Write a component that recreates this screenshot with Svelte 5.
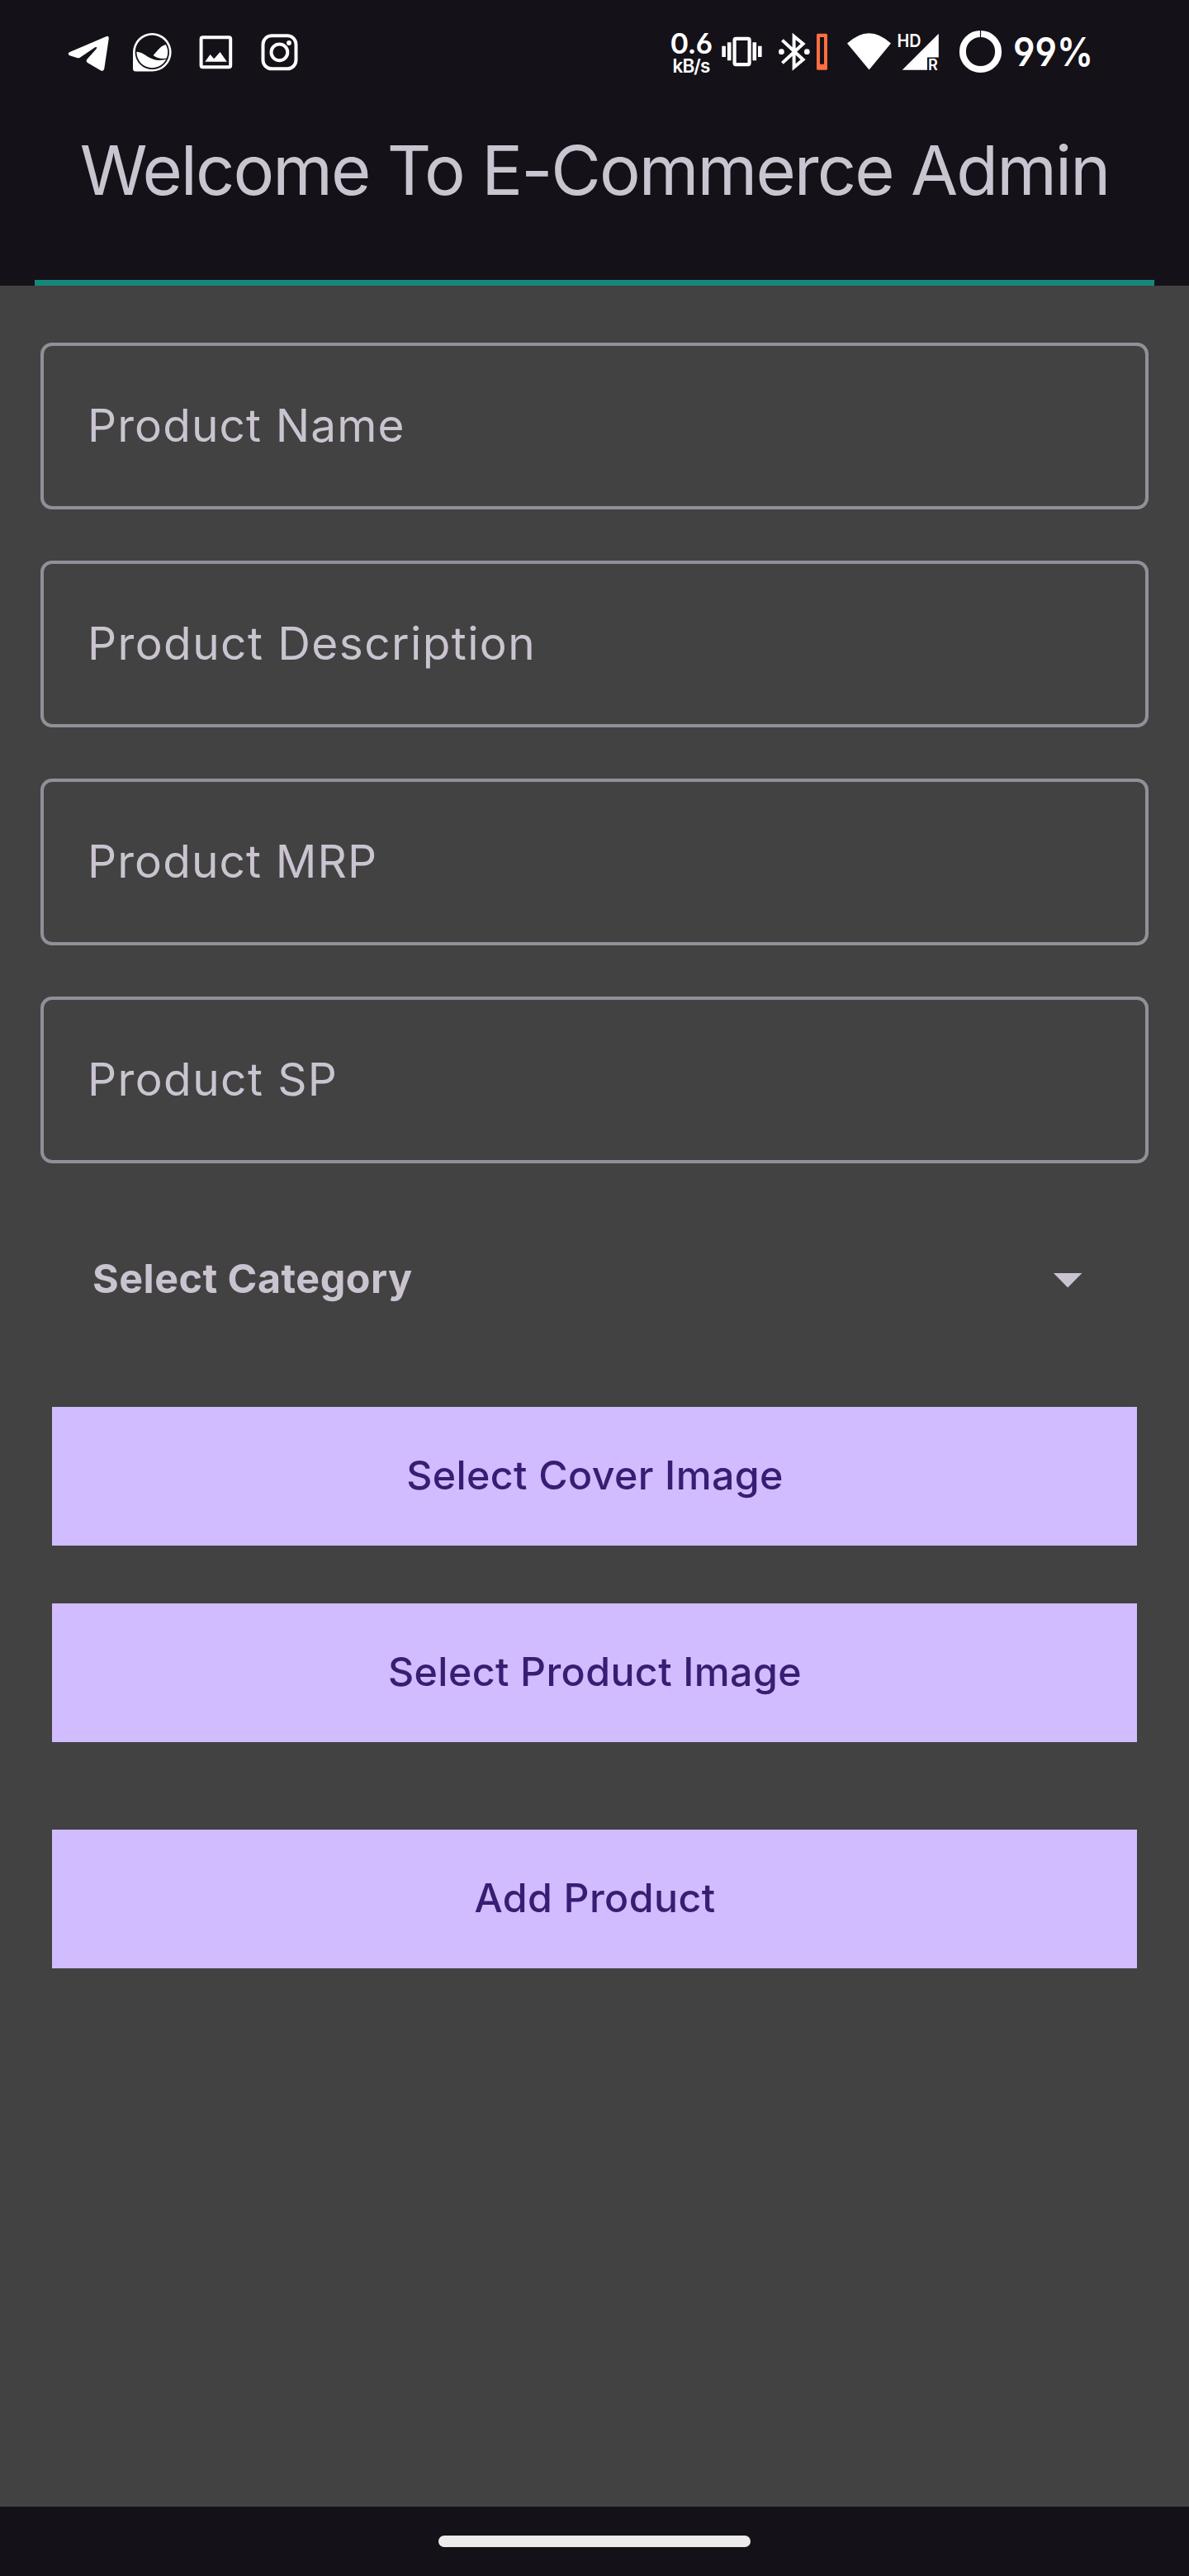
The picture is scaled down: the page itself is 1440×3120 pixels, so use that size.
<script>
  const fields = [
    { id: 'name', label: 'Product Name', spacing: 'regular' },
    { id: 'description', label: 'Product Description', spacing: 'loose' },
    { id: 'mrp', label: 'Product MRP', spacing: 'regular' },
    { id: 'sp', label: 'Product SP', spacing: 'loose' }
  ];
</script>

<div class="screen">
  <header>
    <div class="status">
      <div class="notifications">
        <svg class="telegram" width="52" height="48" viewBox="0 0 52 48" fill="#fff">
          <path d="M2 23.2 L46.5 4.2 Q50 2.9 49.8 6.5 L44.3 43 Q43.4 47.4 39.8 45.3 L24 36 Q21.6 34.2 23.4 31.8 L34.4 19.6 Q36.6 16.3 33.2 17.2 L15.2 29.4 Q13.4 30.7 11.2 30.1 L2.3 27.2 Q-0.7 25.2 2 23.2Z" />
        </svg>
        <svg class="chat" width="50" height="48" viewBox="0 0 50 48">
          <clipPath id="disc"><circle cx="24.3" cy="23.3" r="18.9" /></clipPath>
          <path fill="#fff" d="M24.3 0 A23.3 23.3 0 1 1 24.3 46.6 H4.5 Q1 46.6 1 43 V23.3 A23.3 23.3 0 0 1 24.3 0Z" />
          <circle cx="24.3" cy="23.3" r="20.7" fill="#141118" />
          <g clip-path="url(#disc)" fill="#fff">
            <path d="M4 22.7 C11 22.5 15 26 20 29.3 C27 33.5 34 34 44 31 V46 H4Z" />
            <path d="M25.6 27 C30 23 33 16.5 40 14.3 H46 V29 C39 32.5 31 31.5 25.6 27Z" />
          </g>
        </svg>
        <svg class="picture" width="43" height="48" viewBox="0 0 43 48">
          <rect x="3.6" y="5.3" width="35.6" height="36" rx="2" fill="none" stroke="#fff" stroke-width="4" />
          <path fill="#fff" d="M8.3 34.8 L14.6 26 L19.2 31.3 L26.5 23 L34.8 34.8Z" />
        </svg>
        <svg class="camera" width="47" height="48" viewBox="0 0 47 48" fill="none" stroke="#fff" stroke-width="4">
          <rect x="3.5" y="3.3" width="40" height="40" rx="10.5" />
          <circle cx="23.4" cy="23.3" r="9.9" />
          <circle cx="35" cy="12" r="2.9" fill="#fff" stroke="none" />
        </svg>
      </div>

      <div class="indicators">
        <div class="speed">
          <span class="rate">0.6</span>
          <span class="unit">kB/s</span>
        </div>
        <svg class="vibrate" width="51" height="48" viewBox="0 0 51 48">
          <rect x="16.6" y="6.9" width="18" height="31.2" rx="1.5" fill="none" stroke="#fff" stroke-width="4.2" />
          <path fill="#fff" d="M1.3 15.7 h4.6 v13.3 h-4.6z M7.9 11.3 h4.6 v22 h-4.6z M38.5 11.3 h4.6 v22 h-4.6z M45 15.7 h4.6 v13.3 h-4.6z" />
        </svg>
        <svg class="bluetooth" width="40" height="48" viewBox="0 0 40 48">
          <path fill="none" stroke="#fff" stroke-width="4" d="M5.4 8.6 L30.6 32.2 L19.6 41.5 V4 L30.6 13 L5.4 36.4" />
          <circle cx="4.4" cy="22.7" r="3.4" fill="#fff" />
          <circle cx="35.3" cy="22.7" r="3.4" fill="#fff" />
        </svg>
        <svg class="level" width="13" height="48" viewBox="0 0 13 48">
          <path fill="#ff6e40" fill-rule="evenodd" d="M1.5 .7 h10 q1.5 0 1.5 1.5 v41 q0 1.5 -1.5 1.5 h-10 q-1.5 0 -1.5 -1.5 v-41 q0 -1.5 1.5 -1.5z M4 5 v32.7 h5 v-32.7z" />
        </svg>
        <svg class="wifi" width="53" height="48" viewBox="0 0 53 48">
          <path fill="#fff" d="M0 12.6 Q26.5 -12.2 53 12.6 L26.6 44.6Z" />
        </svg>
        <svg class="signal" width="51" height="48" viewBox="0 0 51 48" fill="#fff">
          <path d="M5.7 44.7 L49.8 .7 V29.4 H36 V44.7Z" />
          <text x="-0.6" y="16.6" font-size="21.5" font-weight="600" textLength="29" lengthAdjust="spacingAndGlyphs">HD</text>
          <text x="37.1" y="44.5" font-size="18" font-weight="600">R</text>
        </svg>
        <svg class="battery" width="53" height="48" viewBox="0 0 53 48">
          <circle cx="26.5" cy="22.5" r="21.6" fill="none" stroke="#fff" stroke-width="8" />
          <path stroke="#141118" stroke-width="1.2" d="M26.5 -4 V6" />
        </svg>
        <svg class="percent" width="98" height="48" viewBox="0 0 98 48" fill="#fff">
          <text x="0" y="39.8" font-size="48" font-weight="600" textLength="97" lengthAdjust="spacingAndGlyphs">99%</text>
        </svg>
      </div>
    </div>
    <h1>Welcome To E-Commerce Admin</h1>
    <div class="divider"></div>
  </header>

  <main>
    <div class="fields">
      {#each fields as field (field.id)}
        <div class="field {field.spacing}">{field.label}</div>
      {/each}
    </div>

    <div class="category">
      <span>Select Category</span>
      <svg class="arrow" width="34" height="18" viewBox="0 0 34 18"><path fill="#cac4d0" d="M0 0 H34.4 L17.2 17.4Z" /></svg>
    </div>

    <div class="actions">
      <button>Select Cover Image</button>
      <button>Select Product Image</button>
      <button class="submit">Add Product</button>
    </div>
  </main>

  <footer><div class="handle"></div></footer>
</div>

<style>
  :global(body) {
    background: #424242;
  }

  .screen {
    width: 1440px;
    height: 3120px;
    display: flex;
    flex-direction: column;
    background: #424242;
    font-family: Inter, Roboto, sans-serif;
    color: #cac4d0;
    overflow: hidden;
  }

  header {
    height: 346px;
    display: flex;
    flex-direction: column;
    background: #141118;
  }

  .status {
    height: 126px;
    box-sizing: border-box;
    padding: 40px 115px 0 82px;
    display: flex;
    align-items: flex-start;
    justify-content: space-between;
    color: #fff;
  }

  .notifications,
  .indicators {
    display: flex;
    align-items: flex-start;
  }

  svg {
    display: block;
    flex: none;
    overflow: visible;
  }

  .chat { margin-left: 26px; }
  .picture { margin-left: 30px; }
  .camera { margin-left: 32px; }

  .speed {
    width: 61px;
    height: 48px;
    box-sizing: border-box;
    padding-right: 3px;
    display: flex;
    flex-direction: column;
    align-items: center;
    font-feature-settings: "ss01";
    white-space: nowrap;
  }

  .rate {
    font-size: 34.5px;
    font-weight: 600;
    line-height: 26px;
    letter-spacing: -0.9px;
  }

  .unit {
    font-size: 22.5px;
    font-weight: 600;
    line-height: 18px;
    letter-spacing: -0.9px;
    margin-top: 5px;
  }

  .vibrate { margin-left: 4px; }
  .bluetooth { margin-left: 18px; }
  .level { margin-left: 7px; }
  .wifi { margin-left: 24px; }
  .signal { margin-left: 8px; }
  .battery { margin-left: 23px; }
  .percent {
    margin-left: 13px;
    font-feature-settings: "ss01";
  }

  h1 {
    margin: 0;
    height: 160px;
    text-align: center;
    font-size: 83px;
    font-weight: 400;
    line-height: 160px;
    letter-spacing: -1.95px;
    white-space: nowrap;
  }

  .divider {
    height: 7px;
    margin: auto 42px 0;
    background: #18877b;
  }

  main {
    flex: 1;
    padding: 69px 49px 0;
  }

  .fields {
    display: grid;
    gap: 62px;
  }

  .field {
    box-sizing: border-box;
    height: 202px;
    padding: 0 53px 2px 53px;
    display: flex;
    align-items: center;
    border: 4px solid #938f99;
    border-radius: 14px;
    font-size: 55px;
    letter-spacing: 1.1px;
  }

  .field.loose {
    letter-spacing: 1.4px;
  }

  .category {
    height: 168px;
    margin-top: 55px;
    padding: 0 81px 0 63px;
    display: flex;
    align-items: center;
    justify-content: space-between;
    font-size: 48.5px;
    font-weight: 650;
    letter-spacing: 0.45px;
  }

  .arrow {
    margin-top: 6px;
  }

  .actions {
    display: flex;
    flex-direction: column;
    gap: 70px;
    padding: 0 14px;
    margin-top: 72px;
  }

  button {
    height: 168px;
    padding: 0 0 3px 1px;
    border: 0;
    background: #d0bcff;
    color: #381e72;
    font-family: inherit;
    font-size: 48.3px;
    font-weight: 500;
    letter-spacing: 0.4px;
  }

  .submit {
    margin-top: 36px;
  }

  footer {
    height: 84px;
    box-sizing: border-box;
    padding-top: 35px;
    background: #141118;
  }

  .handle {
    width: 378px;
    height: 14px;
    margin: 0 auto;
    border-radius: 7px;
    background: #ebebeb;
  }
</style>
